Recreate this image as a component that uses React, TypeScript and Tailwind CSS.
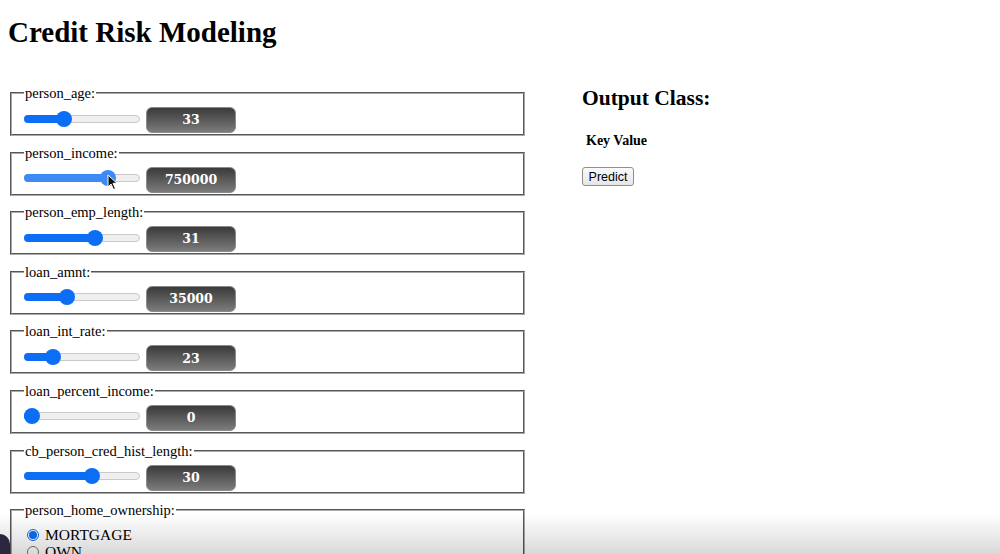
import React from "react";

const serif = { fontFamily: '"Liberation Serif", "Times New Roman", serif' };

type Field = { label: string; value: string; center: number; hover?: boolean };

const fields: Field[] = [
  { label: "person_age:", value: "33", center: 40 },
  { label: "person_income:", value: "750000", center: 84, hover: true },
  { label: "person_emp_length:", value: "31", center: 71 },
  { label: "loan_amnt:", value: "35000", center: 43 },
  { label: "loan_int_rate:", value: "23", center: 29 },
  { label: "loan_percent_income:", value: "0", center: 8 },
  { label: "cb_person_cred_hist_length:", value: "30", center: 68 },
];

function Slider({ center, hover }: { center: number; hover?: boolean }) {
  const color = hover ? "#3d8af7" : "#0b6ef5";
  const left = Math.max(0, center - 8);
  return (
    <div className="relative -mt-[3px] h-[18px] w-[116px]">
      <div className="absolute left-0 right-0 top-[5px] h-[8px] rounded-full border border-[#c9c9c9] bg-[#efefef]" />
      <div
        className="absolute left-0 top-[5px] h-[8px] rounded-full"
        style={{ width: left + 8, background: color }}
      />
      <div
        className="absolute top-[1px] h-[16px] w-[16px] rounded-full"
        style={{ left, background: color }}
      />
    </div>
  );
}

function Cursor() {
  return (
    <svg width="12" height="17" viewBox="0 0 12 17" className="absolute left-[107px] top-[174px]">
      <path d="M1 1 L1 13 L4 10 L6.5 15.5 L8.5 14.5 L6 9.3 L10 9.3 Z" fill="#111" stroke="#fff" strokeWidth="1" />
    </svg>
  );
}

export default function App() {
  return (
    <div className="relative h-[554px] w-[1000px] overflow-hidden bg-white text-black" style={serif}>
      <h1 className="ml-[8px] pt-[15px] text-[29px] font-bold leading-[34px]">Credit Risk Modeling</h1>
      <div className="mt-[36px] flex">
        <div className="ml-[10px] flex w-[515px] flex-col gap-[8.6px]">
          {fields.map((f) => (
            <fieldset
              key={f.label}
              className="h-[51px] border-2 border-[#aaaaaa] px-[12px] [border-style:groove]"
            >
              <legend className="px-[1px] text-[14.5px] leading-[16px]">{f.label}</legend>
              <div className="mt-[6px] flex items-center gap-[6px]">
                <Slider center={f.center} hover={f.hover} />
                <div
                  className="flex h-[26px] w-[90px] items-center justify-center rounded-[6px] border border-[#8a8a8a] bg-linear-to-b from-[#3b3b3b] to-[#7c7c7c] pt-[1px] text-[12.5px] font-bold text-white"
                  style={{ fontFamily: '"DejaVu Serif", Georgia, serif' }}
                >
                  {f.value}
                </div>
              </div>
            </fieldset>
          ))}
          <fieldset className="h-[80px] border-2 border-[#aaaaaa] px-[12px] [border-style:groove]">
            <legend className="px-[1px] text-[14.5px] leading-[16px]">person_home_ownership:</legend>
            <div className="mt-[8px] flex items-center gap-[6px] pl-[3px] text-[15.5px] leading-[17px]">
              <span className="flex h-[12px] w-[12px] items-center justify-center rounded-full border border-[#0b6ef5] bg-white">
                <span className="h-[8px] w-[8px] rounded-full bg-[#0b6ef5]" />
              </span>
              MORTGAGE
            </div>
            <div className="flex items-center gap-[6px] pl-[3px] text-[15.5px] leading-[17px]">
              <span className="h-[12px] w-[12px] rounded-full border border-[#777] bg-white" />
              OWN
            </div>
          </fieldset>
        </div>
        <div className="ml-[57px] flex flex-col items-start">
          <h2 className="mt-0 text-[21.5px] font-bold leading-[26px]">Output Class:</h2>
          <div className="ml-[4px] mt-[22px] text-[14px] font-bold leading-[16px]">Key Value</div>
          <button
            className="mt-[18px] h-[19px] w-[52px] rounded-[3px] border border-[#8f8f8f] bg-linear-to-b from-[#fafafa] to-[#e6e6e6] text-[12.5px] leading-[16px] text-black"
            style={{ fontFamily: '"Liberation Sans", Arial, sans-serif' }}
          >
            Predict
          </button>
        </div>
      </div>
      <Cursor />
      <div className="pointer-events-none absolute bottom-0 left-0 h-[40px] w-full bg-linear-to-b from-transparent to-black/15" />
      <div className="pointer-events-none absolute bottom-0 left-0 h-[20px] w-[10px] rounded-tr-[12px] bg-[#2b2540]" />
    </div>
  );
}
